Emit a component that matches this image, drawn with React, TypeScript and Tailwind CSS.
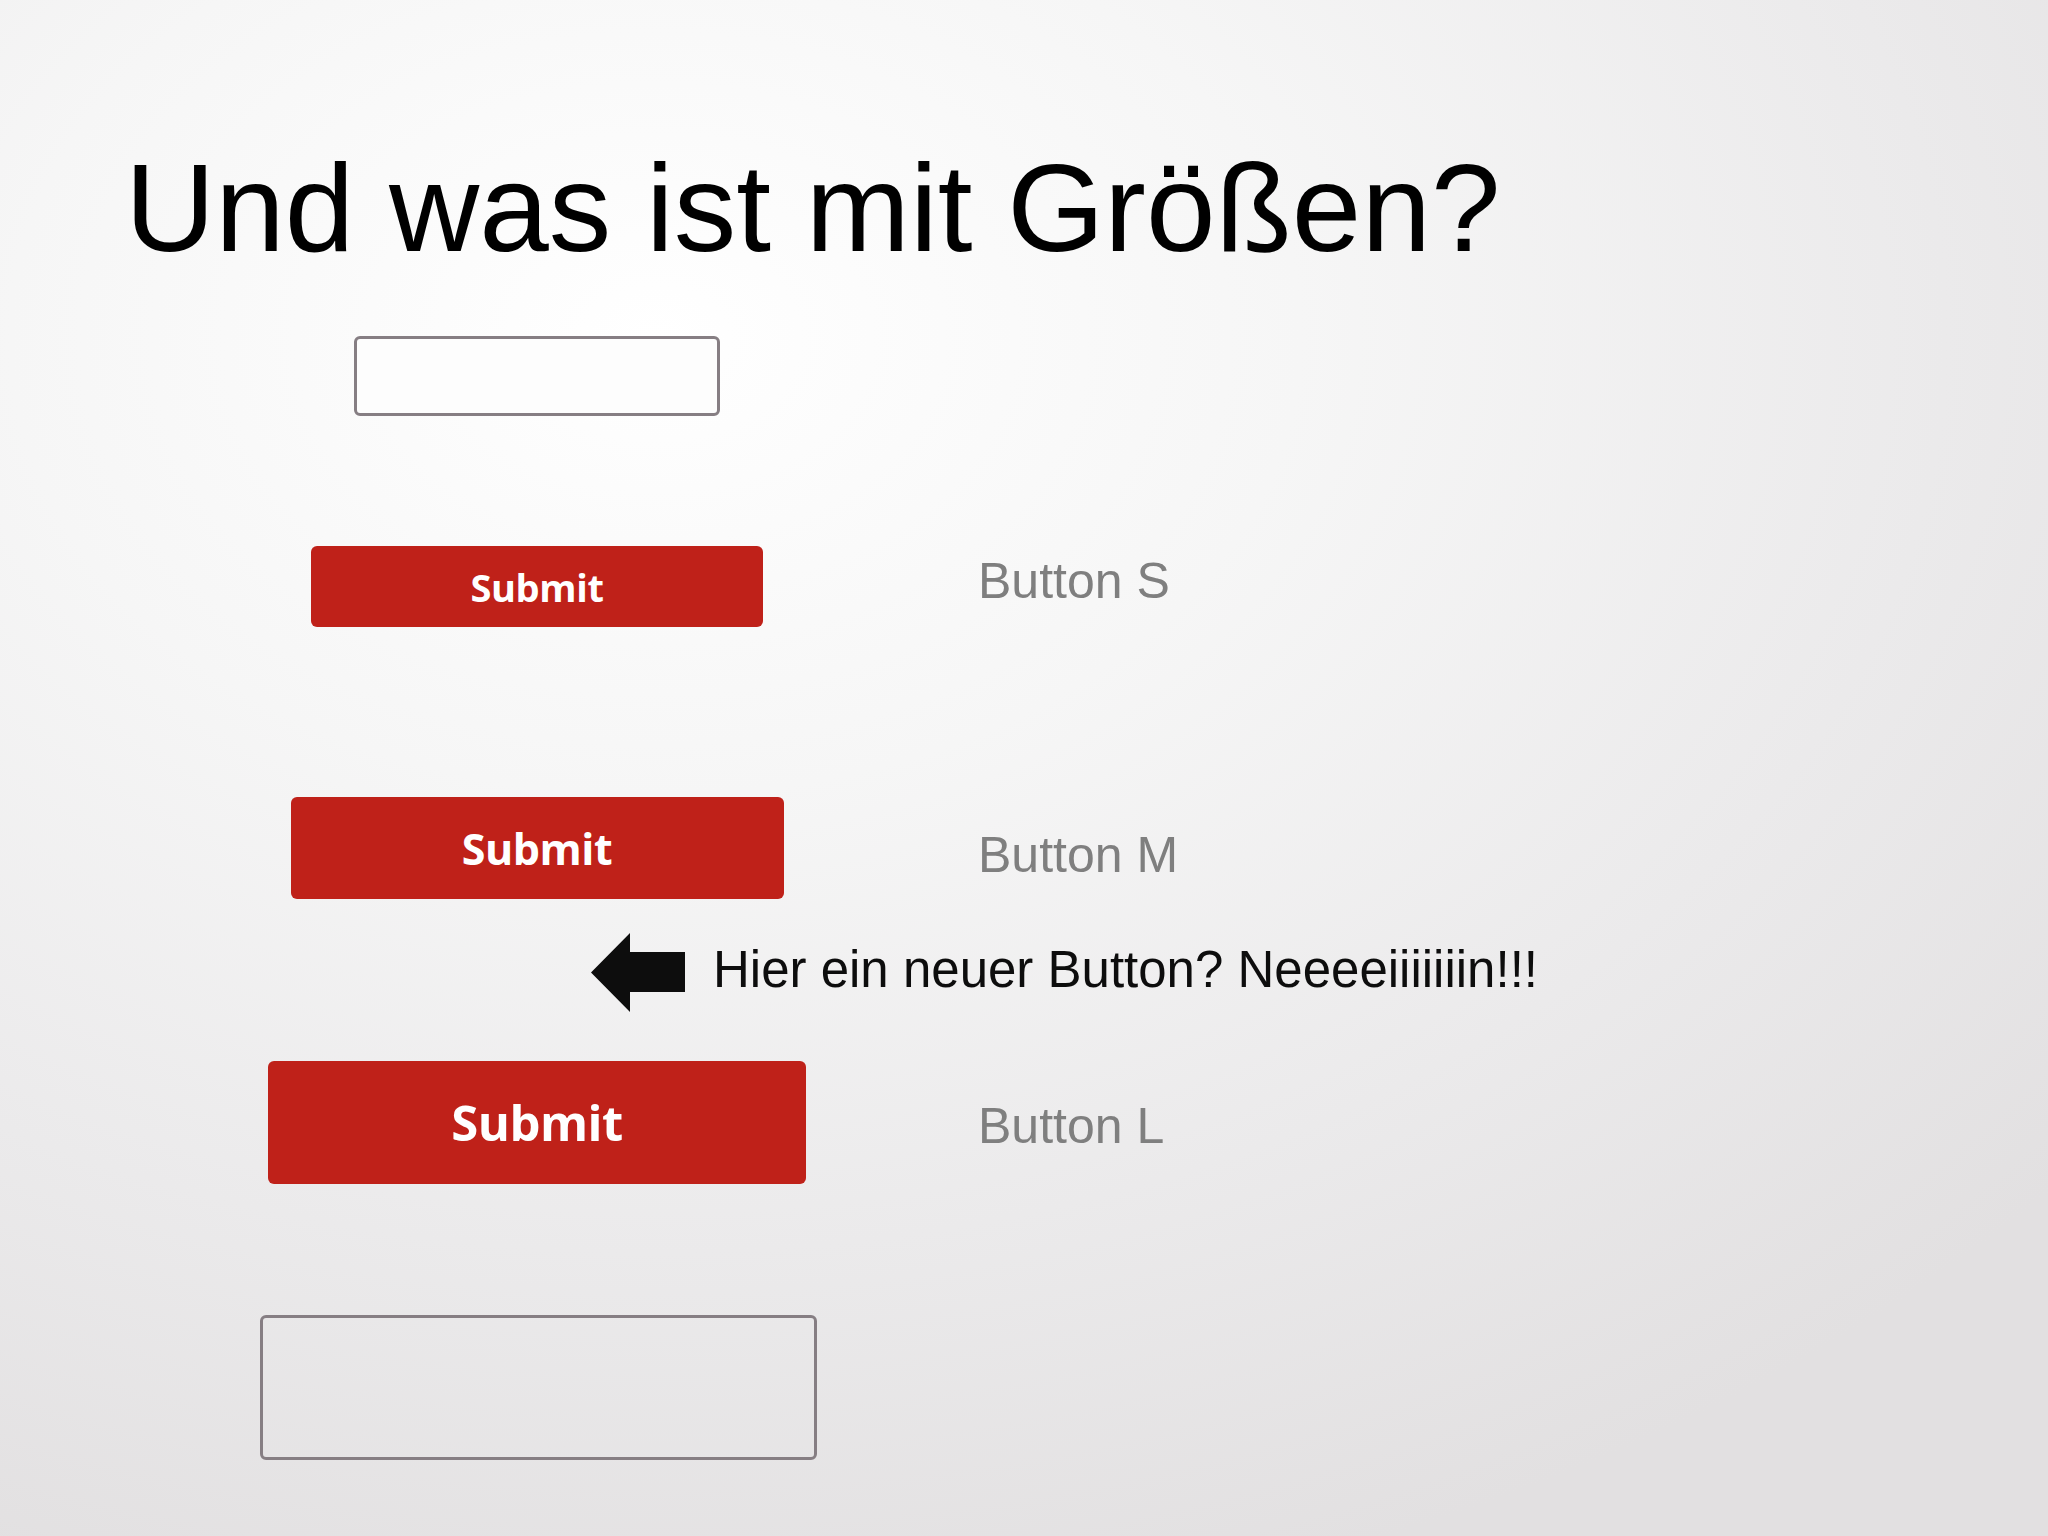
import React from "react";

const sans = "font-['Liberation_Sans',Arial,sans-serif]";
const btnFont = "font-['Open_Sans','Noto_Sans',sans-serif]";

function SubmitButton({ className }: { className: string }) {
  return (
    <button
      type="button"
      className={`flex items-center justify-center rounded-[6px] bg-[#bf2119] font-bold leading-none tracking-[-0.01em] text-white ${btnFont} ${className}`}
    >
      Submit
    </button>
  );
}

function LeftArrow() {
  return (
    <svg width="94" height="79" viewBox="0 0 94 79" className="shrink-0">
      <polygon points="0,39.5 39,0 39,19 94,19 94,59 39,59 39,79" fill="#0d0d0d" />
    </svg>
  );
}

export default function App() {
  return (
    <div className="h-[1536px] w-[2048px] overflow-hidden bg-[radial-gradient(ellipse_90%_85%_at_32%_22%,#ffffff_0%,#f6f6f6_35%,#ebeaeb_70%,#e2e0e1_100%)]">
      {/* Title */}
      <h1 className={`ml-[125px] pt-[145px] text-[125px] leading-none font-normal text-black ${sans}`}>
        Und was ist mit Größen?
      </h1>

      {/* Small input */}
      <div className="mt-[66px] flex w-[1074px] justify-center">
        <input
          type="text"
          className="h-[80px] w-[366px] rounded-[6px] border-[3px] border-[#867e83] bg-[#fdfdfd] outline-none"
        />
      </div>

      {/* Button S */}
      <div className="mt-[130px] flex items-start">
        <div className="ml-[200px] flex w-[674px] justify-center">
          <SubmitButton className="h-[81px] w-[452px] text-[38px]" />
        </div>
        <span className={`ml-[104px] mt-[10px] text-[50px] leading-none text-[#7f7f7f] ${sans}`}>Button S</span>
      </div>

      {/* Button M */}
      <div className="mt-[170px] flex items-start">
        <div className="ml-[200px] flex w-[674px] justify-center">
          <SubmitButton className="h-[102px] w-[493px] text-[43px]" />
        </div>
        <span className={`ml-[104px] mt-[33px] text-[50px] leading-none text-[#7f7f7f] ${sans}`}>Button M</span>
      </div>

      {/* Arrow note */}
      <div className="mt-[34px] flex items-start">
        <div className="ml-[591px]">
          <LeftArrow />
        </div>
        <span className={`ml-[28px] mt-[11px] text-[51px] leading-none text-[#0d0d0d] ${sans}`}>
          Hier ein neuer Button? Neeeeiiiiiiin!!!
        </span>
      </div>

      {/* Button L */}
      <div className="mt-[49px] flex items-start">
        <div className="ml-[200px] flex w-[674px] justify-center">
          <SubmitButton className="h-[123px] w-[538px] text-[49px]" />
        </div>
        <span className={`ml-[104px] mt-[40px] text-[50px] leading-none text-[#7f7f7f] ${sans}`}>Button L</span>
      </div>

      {/* Large input */}
      <div className="mt-[131px] flex w-[1077px] justify-center">
        <input
          type="text"
          className="h-[145px] w-[557px] rounded-[6px] border-[3px] border-[#867e83] bg-transparent outline-none"
        />
      </div>
    </div>
  );
}
